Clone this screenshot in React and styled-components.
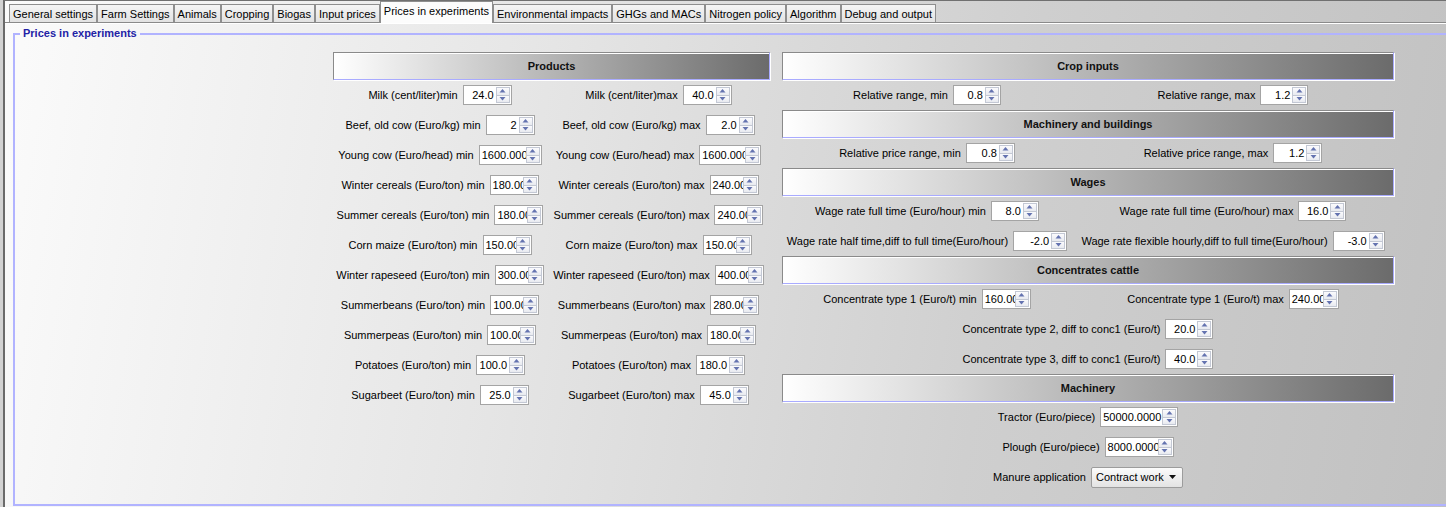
import React from "react";
import styled, { createGlobalStyle } from "styled-components";

const GlobalStyle = createGlobalStyle`
  html, body { margin: 0; padding: 0; overflow: hidden; background: #d2d2d2; }
  body { font-family: "Liberation Sans", Arial, sans-serif; font-size: 11px; color: #000; }
  #root { width: 1446px; height: 507px; overflow: hidden; }
`;

const Frame = styled.div`
  box-sizing: border-box;
  height: 507px;
  margin-left: 3px;
  border-left: 2px solid #6a6a6a;
  border-top: 1px solid #707070;
  display: flex;
  flex-direction: column;
  background: linear-gradient(100deg, #fbfbfb 0%, #e6e6e6 35%, #cfcfcf 68%, #c1c1c1 100%);
`;

const TabStrip = styled.div`
  height: 21px;
  display: flex;
  align-items: flex-end;
  padding-left: 4px;
`;

const Tab = styled.div`
  position: relative;
  z-index: ${(p) => (p.$active ? 2 : 1)};
  box-sizing: border-box;
  height: ${(p) => (p.$active ? "22px" : "18px")};
  margin-bottom: ${(p) => (p.$active ? "-1px" : "0")};
  padding: ${(p) => (p.$active ? "2px 3px 0" : "0 3px")};
  border: 1px solid #8e8e8e;
  border-bottom: none;
  background: ${(p) => (p.$active ? "#fcfcfc" : "linear-gradient(#f5f5f5, #e2e2e2)")};
  display: flex;
  align-items: ${(p) => (p.$active ? "flex-start" : "center")};
  white-space: nowrap;
  line-height: 14px;
`;

const Page = styled.div`
  flex: 1;
  min-height: 0;
  border-top: 1px solid #8a8a8a;
  box-shadow: inset 0 1px 0 #ffffff;
  display: flex;
  flex-direction: column;
  padding: 4px 0 1px 8px;
`;

const Group = styled.fieldset`
  flex: 1;
  margin: 0;
  min-width: 0;
  width: 1700px;
  box-sizing: border-box;
  border: 2px solid #b1b3ff;
  border-right: none;
  padding: 12px 0 0 0;
`;

const Legend = styled.legend`
  margin-left: 5px;
  padding: 0 3px;
  font-weight: bold;
  color: #2323a6;
  line-height: 13px;
`;

const Columns = styled.div`
  display: grid;
  grid-template-columns: 437px 612px;
  column-gap: 12px;
  align-items: start;
  padding-left: 318px;
`;

const Column = styled.div`
  display: flex;
  flex-direction: column;
`;

const Bar = styled.div`
  box-sizing: border-box;
  height: 28px;
  display: flex;
  align-items: center;
  justify-content: center;
  font-weight: bold;
  color: #111;
  border-top: 1px solid #8a8a8a;
  border-left: 1px solid #8a8a8a;
  border-right: 1px solid #a9abff;
  border-bottom: 1px solid #a9abff;
  box-shadow: 1px 1px 0 #ffffff, inset 1px 1px 0 #ffffff;
  background: linear-gradient(to right, #ffffff, #6b6b6b);
`;

const Row = styled.div`
  height: 30px;
  display: grid;
  grid-template-columns: ${(p) => p.$cols || "1fr"};
  align-items: center;
`;

const Field = styled.div`
  display: flex;
  align-items: center;
  justify-content: center;
  gap: 5px;
  white-space: nowrap;
`;

const SpinBox = styled.div`
  box-sizing: border-box;
  width: ${(p) => p.$w}px;
  height: 20px;
  display: flex;
  border: 1px solid #a4a4a4;
  background: #ffffff;
`;

const SpinText = styled.div`
  flex: 1;
  min-width: 0;
  overflow: hidden;
  white-space: nowrap;
  text-align: right;
  padding: 0 2px;
  line-height: 18px;
  color: #000;
`;

const SpinButtons = styled.div`
  width: 14px;
  display: flex;
  flex-direction: column;
  padding: 1px 1px 1px 0;
`;

const SpinBtn = styled.div`
  flex: 1;
  display: flex;
  align-items: center;
  justify-content: center;
  border: 1px solid #c3c8d4;
  margin-top: ${(p) => (p.$down ? "-1px" : "0")};
  background: linear-gradient(#fbfbfd, #e8eaf0);
`;

const Combo = styled.div`
  box-sizing: border-box;
  width: ${(p) => p.$w}px;
  height: 21px;
  display: flex;
  align-items: center;
  justify-content: space-between;
  padding: 0 6px 0 4px;
  border: 1px solid #9c9c9c;
  border-radius: 2px;
  background: linear-gradient(#fbfbfb, #e3e3e3);
`;

const Arrow = ({ down }) => (
  <svg width="7" height="4" viewBox="0 0 7 4">
    <path d={down ? "M0.5 0 L6.5 0 L3.5 3.5 Z" : "M0.5 3.5 L3.5 0 L6.5 3.5 Z"} fill="#6473b0" />
  </svg>
);

const Spinner = ({ value, w = 49 }) => (
  <SpinBox $w={w}>
    <SpinText>{value}</SpinText>
    <SpinButtons>
      <SpinBtn>
        <Arrow />
      </SpinBtn>
      <SpinBtn $down>
        <Arrow down />
      </SpinBtn>
    </SpinButtons>
  </SpinBox>
);

const LabeledSpinner = ({ label, value, w }) => (
  <Field>
    <span>{label}</span>
    <Spinner value={value} w={w} />
  </Field>
);

const tabs = [
  "General settings",
  "Farm Settings",
  "Animals",
  "Cropping",
  "Biogas",
  "Input prices",
  "Prices in experiments",
  "Environmental impacts",
  "GHGs and MACs",
  "Nitrogen policy",
  "Algorithm",
  "Debug and output",
];

const products = [
  ["Milk (cent/liter)min", "24.0", 49, "Milk (cent/liter)max", "40.0", 49],
  ["Beef, old cow (Euro/kg) min", "2", 49, "Beef, old cow (Euro/kg) max", "2.0", 49],
  ["Young cow (Euro/head) min", "1600.000", 63, "Young cow (Euro/head) max", "1600.000", 62],
  ["Winter cereals (Euro/ton) min", "180.00", 49, "Winter cereals (Euro/ton) max", "240.00", 49],
  ["Summer cereals (Euro/ton) min", "180.00", 49, "Summer cereals (Euro/ton) max", "240.00", 49],
  ["Corn maize (Euro/ton) min", "150.00", 49, "Corn maize (Euro/ton) max", "150.00", 49],
  ["Winter rapeseed (Euro/ton) min", "300.00", 49, "Winter rapeseed (Euro/ton) max", "400.00", 49],
  ["Summerbeans (Euro/ton) min", "100.00", 49, "Summerbeans (Euro/ton) max", "280.00", 49],
  ["Summerpeas (Euro/ton) min", "100.00", 49, "Summerpeas (Euro/ton) max", "180.00", 49],
  ["Potatoes (Euro/ton) min", "100.0", 49, "Potatoes (Euro/ton) max", "180.0", 49],
  ["Sugarbeet (Euro/ton) min", "25.0", 49, "Sugarbeet (Euro/ton) max", "45.0", 49],
];

const PairRow = ({ a, b, cols }) => (
  <Row $cols={cols}>
    <LabeledSpinner label={a[0]} value={a[1]} w={a[2]} />
    <LabeledSpinner label={b[0]} value={b[1]} w={b[2]} />
  </Row>
);

const RIGHT_COLS = "290px 1fr";

export default function App() {
  return (
    <>
      <GlobalStyle />
      <Frame>
        <TabStrip>
          {tabs.map((t) => (
            <Tab key={t} $active={t === "Prices in experiments"}>
              {t}
            </Tab>
          ))}
        </TabStrip>
        <Page>
          <Group>
            <Legend>Prices in experiments</Legend>
            <Columns>
              <Column>
                <Bar>Products</Bar>
                {products.map((r) => (
                  <PairRow
                    key={r[0]}
                    cols="214px 1fr"
                    a={[r[0], r[1], r[2]]}
                    b={[r[3], r[4], r[5]]}
                  />
                ))}
              </Column>
              <Column>
                <Bar>Crop inputs</Bar>
                <PairRow
                  cols={RIGHT_COLS}
                  a={["Relative range, min", "0.8", 48]}
                  b={["Relative range, max", "1.2", 48]}
                />
                <Bar>Machinery and buildings</Bar>
                <PairRow
                  cols={RIGHT_COLS}
                  a={["Relative price range, min", "0.8", 49]}
                  b={["Relative price range, max", "1.2", 49]}
                />
                <Bar>Wages</Bar>
                <PairRow
                  cols={RIGHT_COLS}
                  a={["Wage rate full time (Euro/hour) min", "8.0", 48]}
                  b={["Wage rate full time (Euro/hour) max", "16.0", 48]}
                />
                <PairRow
                  cols={RIGHT_COLS}
                  a={["Wage rate half time,diff to full time(Euro/hour)", "-2.0", 54]}
                  b={["Wage rate flexible hourly,diff to full time(Euro/hour)", "-3.0", 52]}
                />
                <Bar>Concentrates cattle</Bar>
                <PairRow
                  cols={RIGHT_COLS}
                  a={["Concentrate type 1 (Euro/t) min", "160.00", 49]}
                  b={["Concentrate type 1 (Euro/t) max", "240.00", 50]}
                />
                <Row>
                  <LabeledSpinner label="Concentrate type 2, diff to conc1 (Euro/t)" value="20.0" w={48} />
                </Row>
                <Row>
                  <LabeledSpinner label="Concentrate type 3, diff to conc1 (Euro/t)" value="40.0" w={48} />
                </Row>
                <Bar>Machinery</Bar>
                <Row>
                  <LabeledSpinner label="Tractor (Euro/piece)" value="50000.0000" w={78} />
                </Row>
                <Row>
                  <LabeledSpinner label="Plough (Euro/piece)" value="8000.0000" w={69} />
                </Row>
                <Row>
                  <Field>
                    <span>Manure application</span>
                    <Combo $w={92}>
                      <span>Contract work</span>
                      <svg width="7" height="4" viewBox="0 0 7 4">
                        <path d="M0 0 L7 0 L3.5 4 Z" fill="#111" />
                      </svg>
                    </Combo>
                  </Field>
                </Row>
              </Column>
            </Columns>
          </Group>
        </Page>
      </Frame>
    </>
  );
}
